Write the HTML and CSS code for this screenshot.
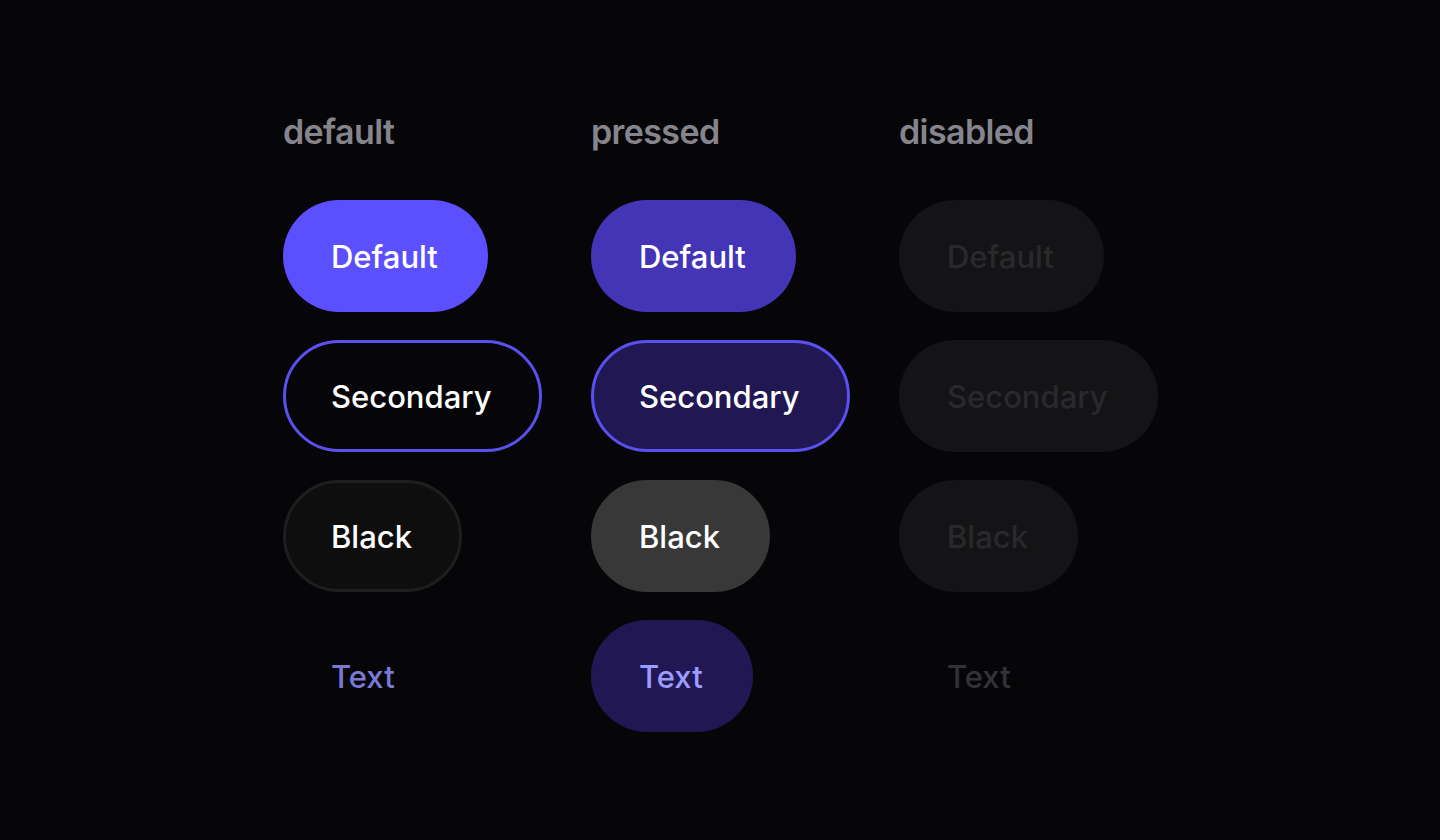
FILE: index.html
```html
<!DOCTYPE html>
<html>
<head>
<meta charset="utf-8">
<link rel="stylesheet" href="styles.css">
</head>
<body>
<main class="board">
  <div class="col">
    <h2 class="label">default</h2>
    <button class="btn primary">Default</button>
    <button class="btn secondary">Secondary</button>
    <button class="btn black">Black</button>
    <button class="btn text">Text</button>
  </div>
  <div class="col">
    <h2 class="label">pressed</h2>
    <button class="btn primary pressed">Default</button>
    <button class="btn secondary pressed">Secondary</button>
    <button class="btn black pressed">Black</button>
    <button class="btn text pressed">Text</button>
  </div>
  <div class="col">
    <h2 class="label">disabled</h2>
    <button class="btn disabled">Default</button>
    <button class="btn disabled">Secondary</button>
    <button class="btn disabled">Black</button>
    <button class="btn text disabled-text">Text</button>
  </div>
</main>
</body>
</html>
```
FILE: styles.css
```css
html, body {
  margin: 0;
  padding: 0;
  background: #060609;
  height: 100%;
}
body {
  font-family: Inter, "Noto Sans", sans-serif;
}
.board {
  display: flex;
  padding: 111px 0 0 283px;
}
.col {
  width: 308px;
  display: flex;
  flex-direction: column;
  align-items: flex-start;
  gap: 28px;
}
.label {
  margin: 0 0 20px 0;
  font-size: 34px;
  line-height: 41px;
  font-weight: 600;
  color: #86858d;
  letter-spacing: -0.6px;
}
.btn {
  box-sizing: border-box;
  height: 112px;
  padding: 0 47px 0 45px;
  border-radius: 56px;
  border: 3px solid transparent;
  font-family: Inter, "Noto Sans", sans-serif;
  font-size: 31px;
  font-weight: 500;
  color: #ffffff;
  background: transparent;
  cursor: pointer;
  letter-spacing: 0;
}
.primary { background: #5b4ffe; }
.primary.pressed { background: #4335b6; }
.secondary { background: #060609; border-color: #5b4ff0; }
.secondary.pressed { background: #211853; }
.black { background: #0e0e0f; border-color: #1e1e20; }
.black.pressed { background: #383838; border-color: #383838; }
.text { color: #7b79d6; }
.text.pressed { background: #211853; color: #9c9bff; }
.disabled { background: #141416; color: #29292c; }
.disabled-text { color: #333337; }
```
